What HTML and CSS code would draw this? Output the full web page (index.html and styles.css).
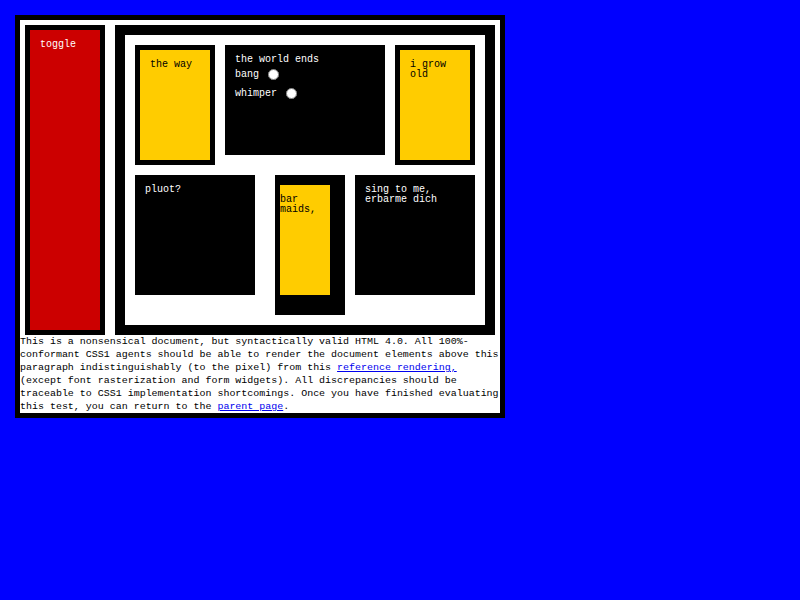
FILE: index.html
```html
<!DOCTYPE html>
<html class="page">
<head>
<meta charset="utf-8">
<title>display/box/float/clear test</title>
<link rel="stylesheet" href="styles.css">
</head>
<body class="frame">
<dl class="list">
<dt class="toggle">toggle</dt>
<dd class="panel">
<ul class="items">
<li class="item">the way</li>
<li class="item bar">
<p class="line">the world ends</p>
<form class="choices" action="./" method="get">
<p class="line tall">bang <input class="radio" type="radio" name="foo" value="off"></p>
<p class="line tall">whimper <input class="radio" type="radio" name="foo2" value="on"></p>
</form>
</li>
<li class="item">i grow old</li>
<li class="item baz">pluot?</li>
</ul>
<blockquote class="quote"><address class="addr">bar maids,</address></blockquote>
<h1 class="heading">sing to me, erbarme dich</h1>
</dd>
</dl>
<p class="note">This is a nonsensical document, but syntactically valid HTML 4.0. All 100%-conformant CSS1 agents should be able to render the document elements above this paragraph indistinguishably (to the pixel) from this <a class="link" href="#">reference rendering,</a> (except font rasterization and form widgets). All discrepancies should be traceable to CSS1 implementation shortcomings. Once you have finished evaluating this test, you can return to the <a class="link" href="#">parent page</a>.</p>
</body>
</html>
```

FILE: styles.css
```css
.page {
  font: 10px/1 "Liberation Mono", monospace;
  background-color: blue;
  color: white;
}

.frame {
  margin: 15px;
  border: 5px solid black;
  padding: 0;
  width: 480px;
  background-color: white;
}

.list {
  margin: 0;
  border: 0;
  padding: 5px;
}

.toggle {
  background-color: rgb(204, 0, 0);
  margin: 0;
  padding: 10px;
  width: 50px;
  height: 280px;
  border: 5px solid black;
  float: left;
}

.panel {
  float: right;
  margin: 0 0 0 10px;
  border: 10px solid black;
  padding: 10px;
  width: 340px;
  height: 270px;
}

.items {
  margin: 0;
  border: 0;
  padding: 0;
}

.item {
  display: block;
  color: black;
  height: 90px;
  width: 50px;
  margin: 0;
  border: 5px solid black;
  padding: 10px;
  float: left;
  background-color: #fc0;
}

.item.bar {
  background-color: black;
  color: white;
  width: 140px;
  border: 0;
  margin: 0 10px;
}

.item.baz {
  margin: 10px 0;
  border: 0;
  padding: 10px;
  width: 100px;
  height: 100px;
  background-color: black;
  color: white;
}

.choices {
  margin: 0;
  display: inline;
}

.line {
  margin: 0;
}

.line.tall {
  line-height: 1.9;
}

.radio {
  width: 11px;
  height: 11px;
  margin: 0 3px 0 3px;
  vertical-align: middle;
}

.quote {
  margin: 10px 10px 10px 20px;
  border-width: 10px 15px 20px 5px;
  border-style: solid;
  border-color: black;
  padding: 10px 0;
  width: 50px;
  height: 90px;
  float: left;
  background-color: #fc0;
  color: black;
}

.addr {
  font-style: normal;
}

.heading {
  background-color: black;
  color: white;
  float: left;
  margin: 10px 0;
  border: 0;
  padding: 10px;
  width: 100px;
  height: 100px;
  font-weight: normal;
  font-size: 10px;
}

.note {
  margin: 0;
  color: black;
  font-size: 9.98px;
  line-height: 13px;
  clear: both;
}

.link {
  color: #0000ee;
}
```
